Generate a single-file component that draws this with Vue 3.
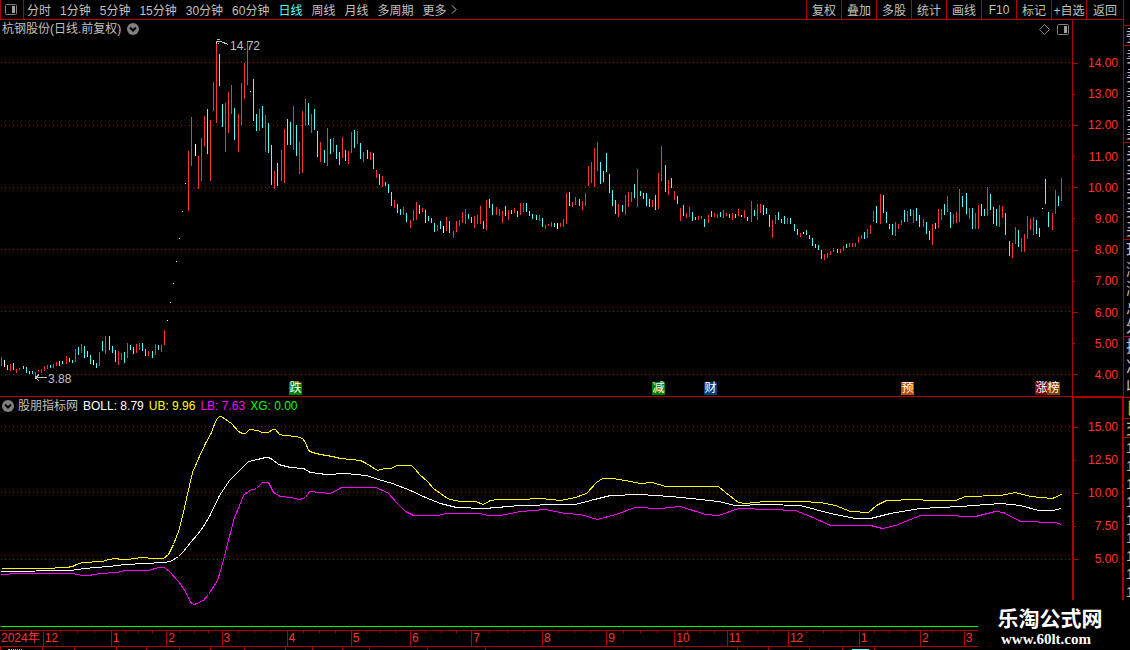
<template>
  <div class="screen">
    <main class="desk">
      <header class="toolbar">
        <button class="layout-btn" aria-label="布局">
          <svg class="pane-icon" viewBox="0 0 12 11">
            <rect x="0.5" y="0.5" width="11" height="10" rx="1" />
            <rect class="solid" x="7" y="2" width="3" height="7" />
          </svg>
        </button>
        <nav class="periods">
          <button v-for="p in periods" :key="p" :class="{ active: p === '日线' }">{{ p }}</button>
          <button class="more">
            更多
            <svg class="chevron" viewBox="0 0 6 9"><path d="M1 0.5L5 4.5L1 8.5" /></svg>
          </button>
        </nav>
        <nav class="tools">
          <button v-for="t in tools" :key="t">{{ t }}</button>
        </nav>
      </header>

      <section class="panel price">
        <div class="chart">
          <div class="chart-head">
            <span class="title">杭钢股份(日线.前复权)</span>
            <button class="round" aria-label="展开">
              <svg viewBox="0 0 12 12"><circle cx="6" cy="6" r="6" /><path d="M3 4.5L6 7.5L9 4.5" /></svg>
            </button>
            <div class="head-icons">
              <svg class="diamond" viewBox="0 0 11 11"><path d="M5.5 0.5L10.5 5.5L5.5 10.5L0.5 5.5Z" /></svg>
              <svg class="pane-icon" viewBox="0 0 12 11">
                <rect x="0.5" y="0.5" width="11" height="10" rx="1" />
                <rect class="solid" x="7" y="2" width="3" height="7" />
              </svg>
            </div>
          </div>
          <div class="plot">
            <svg viewBox="0 38 1072 358" preserveAspectRatio="none" shape-rendering="crispEdges">
              <path v-for="y in [62, 125, 187, 249, 311, 374]" :key="y" class="grid" :d="`M1 ${y}.5H1072`" />
              <path class="bar up" :d="bars('r')" />
              <path class="bar down" :d="bars('c')" />
              <path class="bar flat" :d="bars('w')" />
              <path class="arrow" d="M216.5 44V40.5M217 39.5H220M217 41.5H221L228 44.5M218 43.5H219" />
              <path class="arrow" d="M36 377.5H47M39 374.5L36 377.5L39 381M35.5 376V379" />
            </svg>
            <span v-for="m in marks" :key="m.text" class="mark" :style="{ left: pct(m.x, 1072), top: pct(m.y - 38, 358) }">{{ m.text }}</span>
            <span v-for="b in badges" :key="b.text" class="badge" :style="{ left: pct(b.x, 1072), background: b.color }">{{ b.text }}</span>
          </div>
        </div>
        <div class="axis">
          <span v-for="(v, i) in priceTicks" :key="v" :class="{ minor: i % 2 }">{{ v }}</span>
        </div>
      </section>

      <section class="panel indicator">
        <div class="chart">
          <div class="chart-head">
            <button class="round" aria-label="指标">
              <svg viewBox="0 0 12 12"><circle cx="6" cy="6" r="6" /><path d="M3 4.5L6 7.5L9 4.5" /></svg>
            </button>
            <span class="title">股朋指标网</span>
            <span class="boll">BOLL: 8.79</span>
            <span class="ub">UB: 9.96</span>
            <span class="lb">LB: 7.63</span>
            <span class="xg">XG: 0.00</span>
          </div>
          <div class="plot">
            <svg viewBox="0 414 1072 216" preserveAspectRatio="none" shape-rendering="crispEdges">
              <path v-for="y in [426, 492, 559]" :key="y" class="grid" :d="`M1 ${y}.5H1072`" />
              <g transform="translate(0.5 0.5)">
                <polyline class="line-ub" :points="ub" />
                <polyline class="line-boll" :points="boll" />
                <polyline class="line-lb" :points="lb" />
              </g>
              <path class="line-xg" d="M1 626.5H1072" />
            </svg>
          </div>
        </div>
        <div class="axis">
          <span v-for="(v, i) in bollTicks" :key="v" :class="{ minor: i % 2 }">{{ v }}</span>
        </div>
      </section>

      <div class="months">
        <div v-for="(m, i) in months" :key="i" class="month" :style="{ flexGrow: m.w }">
          {{ m.label }}
          <div v-if="i > 0" class="weeks"><i></i><i></i><i></i><i></i></div>
        </div>
      </div>
      <div class="strip">
        <div v-for="(w, i) in stripCells" :key="i" :style="{ flexGrow: w }"></div>
      </div>
    </main>

    <aside class="rail">
      <div v-for="(g, i) in quotes" :key="i" class="group" :class="g.kind">
        <span v-for="(r, j) in g.rows" :key="j">{{ r }}</span>
      </div>
    </aside>

    <div class="brand">
      <strong>乐淘公式网</strong>
      <a href="#">www.60lt.com</a>
    </div>
  </div>
</template>

<script setup>
const periods = ['分时', '1分钟', '5分钟', '15分钟', '30分钟', '60分钟', '日线', '周线', '月线', '多周期']
const tools = ['复权', '叠加', '多股', '统计', '画线', 'F10', '标记', '+自选', '返回']
const priceTicks = ['14.00', '13.00', '12.00', '11.00', '10.00', '9.00', '8.00', '7.00', '6.00', '5.00', '4.00']
const bollTicks = ['15.00', '12.50', '10.00', '7.50', '5.00']

const marks = [
  { text: '14.72', x: 230, y: 46 },
  { text: '3.88', x: 48, y: 379 },
]
const badges = [
  { text: '跌', x: 289, color: '#008000' },
  { text: '减', x: 652, color: '#008000' },
  { text: '财', x: 704, color: '#004080' },
  { text: '预', x: 901, color: '#c04c10' },
  { text: '涨', x: 1035, color: '#800000' },
  { text: '榜', x: 1047, color: '#804000' },
]

const months = [
  { label: '2024年', w: 43 },
  { label: '12', w: 68 },
  { label: '1', w: 55 },
  { label: '2', w: 55 },
  { label: '3', w: 65 },
  { label: '4', w: 64 },
  { label: '5', w: 59 },
  { label: '6', w: 61 },
  { label: '7', w: 71 },
  { label: '8', w: 64 },
  { label: '9', w: 68 },
  { label: '10', w: 52 },
  { label: '11', w: 61 },
  { label: '12', w: 71 },
  { label: '1', w: 61 },
  { label: '2', w: 43 },
  { label: '3', w: 162 },
]
const stripCells = [42, 31, 42, 29, 33, 30, 34, 41, 26, 30, 26, 58, 58, 255, 31, 41, 32, 32, 252]

const quotes = [
  { kind: 'top', rows: [] },
  { kind: 'ratio', rows: ['委'] },
  { kind: '', rows: ['卖', '卖', '卖', '卖', '卖'] },
  { kind: '', rows: ['买', '买', '买', '买', '买'] },
  { kind: '', rows: ['现', '涨', '涨', '总', '外'] },
  { kind: 'basics', rows: ['换', '净', '收'] },
  { kind: 'tab', rows: ['日'] },
  { kind: 'deal', rows: ['交'] },
  { kind: 'ticks', rows: Array(9).fill('1') },
]

// x, high, low, colour (r up, c down, w flat)
const candles = `
1 357 366 r|4 360 367 w|7 365 370 c|10 364 371 r|13 363 370 c|16 369 373 r|19 368 370 r|23 366 369 c|26 367 373 c|29 371 374 c
32 371 374 c|35 372 378 r|38 370 372 r|41 369 373 r|44 366 371 r|47 365 369 r|50 365 368 c|53 364 368 r|56 362 366 r|59 361 366 c
62 361 364 c|66 356 364 r|69 358 362 c|72 360 363 c|75 349 362 r|78 347 355 c|81 344 353 r|84 346 358 c|87 351 357 c|90 355 364 c
93 360 365 w|96 363 368 c|99 352 366 r|102 341 351 c|105 336 354 r|109 336 350 c|112 346 353 c|115 350 362 c|118 351 365 r|121 353 360 r
124 352 363 c|127 343 358 r|130 345 350 c|133 347 354 c|136 344 353 r|139 343 350 r|142 343 351 c|145 349 356 c|148 351 356 r|152 351 358 c
155 344 355 r|158 345 350 c|161 345 352 r|164 330 345 r|167 320 321 w|170 302 303 w|173 283 284 w|176 261 262 w|179 238 239 w|182 211 212 w
185 183 184 w|188 151 211 r|191 117 166 r|195 144 156 w|198 156 189 r|201 138 181 r|204 116 146 r|207 109 154 c|210 120 181 r|213 82 111 r
216 43 123 r|219 54 86 c|222 104 127 c|225 103 152 r|228 92 133 r|231 85 114 r|234 108 140 c|238 114 152 r|241 83 125 r|244 63 99 r
247 41 85 r|250 91 92 w|253 79 121 c|256 114 131 c|259 109 131 r|262 106 128 c|265 115 152 r|268 123 153 c|271 145 185 c|274 171 189 r
277 163 186 c|281 150 181 r|284 129 183 r|287 119 145 c|290 122 145 c|293 106 150 r|296 125 156 c|299 142 174 r|302 111 173 r|305 99 125 r
308 103 125 c|311 114 133 r|314 109 130 c|317 131 157 c|320 142 162 r|324 150 163 c|327 128 166 r|330 139 154 c|333 138 152 r|336 145 159 c
339 152 165 c|342 137 158 r|345 150 161 c|348 151 164 r|351 132 153 r|354 130 148 c|357 131 144 r|360 143 159 c|363 152 162 r|367 150 159 c
370 152 160 r|373 153 169 c|376 170 178 r|379 174 185 c|382 176 187 r|385 182 186 c|388 184 193 c|391 192 206 c|394 200 208 r|397 204 213 c
400 209 215 c|403 207 215 r|406 213 222 c|410 220 228 r|413 210 221 r|416 202 220 r|419 205 214 c|422 208 212 r|425 210 223 c|428 216 221 c
431 218 223 c|434 223 232 c|437 225 231 r|440 221 229 c|443 226 233 w|446 217 231 r|449 221 233 c|453 231 238 r|456 221 232 r|459 220 226 r
462 212 223 r|465 209 224 r|468 214 219 c|471 217 223 c|474 216 228 r|477 215 224 r|480 206 224 r|483 221 229 c|486 200 230 r|489 199 208 c
492 204 215 c|496 207 215 r|499 209 216 r|502 211 223 r|505 206 216 c|508 210 220 r|511 210 214 c|514 208 213 r|517 211 217 c|520 203 215 r
523 203 212 r|526 203 212 c|529 211 216 c|532 214 219 c|536 215 220 c|539 215 221 r|542 218 227 c|545 225 229 r|548 224 226 r|551 222 227 r
554 223 227 c|557 223 229 w|560 223 227 r|563 219 227 r|566 193 224 r|569 192 206 c|572 202 207 r|575 197 205 r|579 199 206 c|582 201 210 r
585 193 206 r|588 166 186 r|591 162 183 r|594 148 187 r|597 142 171 r|600 162 184 c|603 171 182 c|606 153 172 c|609 174 193 c|612 190 206 c
615 200 214 c|618 204 217 r|622 205 212 c|625 195 215 r|628 192 207 r|631 192 202 r|634 184 198 c|637 169 207 r|640 191 196 c|643 193 199 c
646 193 206 c|649 199 207 c|652 200 207 r|655 195 210 c|658 173 209 r|661 146 181 r|665 165 192 c|668 180 195 r|671 178 188 c|674 191 200 r
677 196 204 c|680 208 221 r|683 205 216 c|686 213 218 r|689 207 217 r|692 212 221 c|695 217 220 c|698 216 220 r|701 216 219 r|704 219 227 c
708 215 223 r|711 211 217 c|714 213 217 r|717 214 218 r|720 212 217 c|723 210 218 r|726 213 216 r|729 214 218 c|732 213 220 r|735 214 218 c
738 209 216 r|741 215 217 w|744 210 218 r|747 217 221 c|751 201 222 r|754 210 216 c|757 204 220 r|760 204 213 r|763 205 215 c|766 208 214 c
769 215 227 c|772 220 238 r|775 215 224 r|778 212 220 c|781 219 223 c|784 216 224 c|787 218 224 r|790 218 224 c|794 224 231 c|797 229 235 c
800 233 237 r|803 232 234 w|806 230 235 c|809 235 239 c|812 238 246 c|815 244 248 c|818 245 250 c|821 250 259 c|824 254 260 r|827 253 258 r
830 251 255 r|833 248 252 r|837 249 253 c|840 249 253 r|843 246 251 r|846 244 248 c|849 243 247 r|852 243 247 r|855 243 247 r|858 237 243 r
861 235 239 r|864 232 239 c|867 229 238 r|870 225 234 r|873 211 222 r|876 206 223 c|880 194 224 r|883 195 213 c|886 212 223 c|889 224 229 c
892 224 235 c|895 222 236 r|898 224 229 r|901 220 225 r|904 210 222 c|907 211 222 r|910 209 216 c|913 210 223 r|916 208 221 c|919 215 227 c
923 219 227 r|926 222 234 c|929 231 240 c|932 224 245 r|935 223 229 c|938 209 228 r|941 209 220 r|944 204 215 c|947 196 212 r|950 212 228 c
953 214 224 r|956 212 223 r|959 189 222 r|962 196 207 c|966 193 214 c|969 208 219 r|972 208 229 c|975 213 229 r|978 205 229 r|981 204 216 c
984 209 216 c|987 187 216 r|990 194 210 c|993 207 224 c|996 209 226 c|999 205 227 r|1002 206 218 r|1005 213 235 c|1009 241 256 c|1012 243 258 r
1015 227 244 r|1018 230 247 c|1021 238 252 r|1024 234 252 r|1027 216 239 r|1030 219 230 r|1033 217 235 r|1036 220 234 c|1039 228 237 c
1042 208 209 w|1045 179 204 c|1048 212 227 c|1052 213 230 r|1055 190 214 r|1058 196 206 c|1061 178 201 r
`
  .trim()
  .split(/[|\n]/)
  .map((s) => s.split(' '))

const bars = (kind) =>
  candles
    .filter((c) => c[3] === kind)
    .map(([x, hi, lo]) => `M${x}.5 ${hi}V${lo}`)
    .join('')

const pct = (v, total) => `${(v / total) * 100}%`

const ub =
  '1,568 53,568 56,567 66,567 72,566 76,564 82,562 102,561 108,559 116,558 120,559 128,559 133,558 142,557 152,558 163,558 168,554 173,544 178,531 182,516 186,498 189,485 192,472 199,456 205,443 211,432 215,421 217,418 219,416 221,416 231,423 238,431 242,433 245,433 249,429 257,430 262,432 268,432 272,429 275,429 279,434 284,435 296,436 302,438 305,442 308,450 312,452 320,454 332,456 340,458 360,460 366,463 377,470 384,468 390,468 397,465 411,465 415,469 419,474 427,481 433,488 440,493 447,498 454,500 461,501 475,501 483,504 490,500 497,499 520,499 540,498 560,500 575,497 586,493 596,482 602,478 612,478 625,480 640,483 652,482 665,486 718,486 725,492 738,502 745,503 765,501 800,501 820,502 835,505 850,511 868,512 876,505 886,500 915,499 930,500 955,500 965,496 1000,495 1015,492 1030,496 1052,498 1061,494'
const boll =
  '1,571 70,570 84,568 108,566 125,564 145,563 163,562 170,561 178,556 183,551 190,542 197,534 203,526 209,516 219,495 229,480 238,471 248,461 257,459 265,457 268,457 272,459 278,464 290,467 303,468 310,472 326,474 345,473 366,475 378,479 392,483 410,490 425,497 440,503 456,507 484,508 520,505 560,504 575,504 590,500 610,495 640,494 670,496 700,499 718,501 735,505 765,504 800,505 815,509 830,513 855,518 870,518 890,513 920,508 960,506 1000,503 1020,505 1038,510 1052,510 1061,508'
const lb =
  '1,574 16,573 72,573 82,575 88,575 100,573 116,572 125,570 148,570 158,567 164,567 170,572 178,581 183,588 191,603 194,604 203,600 208,594 217,580 220,570 224,556 229,536 234,517 239,505 243,495 249,490 256,488 262,482 268,482 273,492 280,496 290,497 299,499 305,497 309,491 330,493 341,487 375,487 387,492 397,503 405,511 413,515 438,515 445,513 480,513 487,515 500,515 520,511 545,509 565,513 580,514 597,519 615,514 635,507 660,508 680,506 705,514 718,515 738,508 770,509 795,510 810,516 830,525 870,525 882,528 895,525 920,515 940,515 975,516 995,511 1003,512 1020,521 1055,522 1061,524'
</script>

<style>
body {
  background: #000;
}
</style>

<style scoped>
.screen {
  position: relative;
  display: flex;
  height: 100vh;
  overflow: hidden;
  background: #000;
  color: #c0c0c0;
  font-family: 'Liberation Sans', 'Noto Sans CJK SC', sans-serif;
  font-size: 12px;
}
.desk {
  flex: 1;
  min-width: 0;
  display: flex;
  flex-direction: column;
}
button {
  padding: 0;
  border: 0;
  background: none;
  color: inherit;
  font: inherit;
  white-space: nowrap;
}
svg {
  display: block;
  fill: none;
}
.toolbar {
  display: flex;
  flex: 0 0 19px;
  border-bottom: 1px solid #b00000;
}
.layout-btn {
  width: 24px;
  padding-left: 4px;
  border: solid #b00000;
  border-width: 0 1px;
}
.pane-icon {
  width: 12px;
  height: 11px;
  stroke: #808080;
}
.pane-icon .solid {
  fill: #a0a0a0;
  stroke: none;
}
.periods {
  display: flex;
  gap: 9px;
  padding-left: 3px;
}
.active {
  color: #54ffff;
}
.more {
  display: flex;
  align-items: center;
  gap: 4px;
}
.chevron {
  width: 6px;
  height: 9px;
  stroke: #c0c0c0;
}
.tools {
  display: flex;
  margin-left: auto;
}
.tools button {
  width: 35px;
  border-left: 1px solid #b00000;
}
.tools button:last-child {
  width: 37px;
}
.panel {
  display: flex;
  min-height: 0;
}
.price {
  flex: 377 1 0;
}
.indicator {
  flex: 233 1 0;
}
.chart {
  flex: 1;
  min-width: 0;
  display: flex;
  flex-direction: column;
}
.price .chart,
.price .axis {
  border-bottom: 1px solid #b00000;
}
.chart-head {
  display: flex;
  align-items: center;
  flex: 0 0 18px;
  padding: 0 3px 0 2px;
  line-height: 16px;
  white-space: nowrap;
}
.indicator .chart-head {
  flex-basis: 17px;
}
.price .title {
  margin-right: 6px;
}
.indicator .title {
  margin: 0 5px 0 4px;
}
.round svg {
  width: 12px;
  height: 12px;
}
.round circle {
  fill: #808080;
}
.round path {
  stroke: #000;
  stroke-width: 2;
}
.head-icons {
  display: flex;
  gap: 7px;
  margin-left: auto;
}
.diamond {
  width: 11px;
  height: 11px;
  stroke: #808080;
}
.boll {
  color: #fff;
  margin-right: 5px;
}
.ub {
  color: #ff0;
  margin-right: 5px;
}
.lb {
  color: #f0f;
  margin-right: 5px;
}
.xg {
  color: #0f0;
}
.plot {
  position: relative;
  flex: 1;
  min-height: 0;
}
.plot svg {
  width: 100%;
  height: 100%;
}
.grid {
  stroke: #b00000;
  stroke-dasharray: 1 3;
}
.up {
  stroke: #ff3232;
}
.down {
  stroke: #54ffff;
}
.flat {
  stroke: #fff;
}
.arrow {
  stroke: #c0c0c0;
}
.line-ub {
  stroke: #ff0;
}
.line-boll {
  stroke: #fff;
}
.line-lb {
  stroke: #f0f;
}
.line-xg {
  stroke: #0f0;
}
.mark {
  position: absolute;
  line-height: 14px;
  margin-top: -7px;
}
.badge {
  position: absolute;
  bottom: 1px;
  width: 13px;
  height: 13px;
  line-height: 13px;
  text-align: center;
  color: #fff;
}
.axis {
  display: flex;
  flex-direction: column;
  justify-content: space-between;
  box-sizing: border-box;
  width: 51px;
  padding: 37px 5px 15px 0;
  border-left: 1px solid #b00000;
  color: #ff3232;
  line-height: 12px;
  text-align: right;
}
.axis span {
  display: flex;
  align-items: center;
  justify-content: space-between;
}
.axis span::before {
  content: '';
  width: 5px;
  height: 1px;
  background: #b00000;
}
.axis .minor::before {
  width: 2px;
}
.indicator .axis {
  padding: 23px 4px 65px 0;
  border-top: 1px solid #b00000;
  border-left-width: 2px;
  border-right: 1px solid #b00000;
}
.months {
  display: flex;
  flex: 0 0 15px;
  border: solid #b00000;
  border-width: 1px 0;
  color: #ff3232;
  line-height: 15px;
}
.month {
  position: relative;
  flex: 1 1 0;
  min-width: 0;
  height: 15px;
  box-sizing: border-box;
  padding-left: 1px;
  white-space: nowrap;
}
.month + .month {
  border-left: 1px solid #b00000;
}
.weeks {
  position: absolute;
  inset: 0 0 auto 0;
  display: flex;
}
.weeks i {
  flex: 1;
  height: 2px;
}
.weeks i + i {
  border-left: 1px solid #b00000;
}
.strip {
  display: flex;
  flex: 0 0 3px;
}
.strip div {
  flex: 1 1 0;
  box-sizing: border-box;
  border-left: 1px solid #b00000;
}
.strip div:first-child::after,
.strip div:nth-child(18)::after {
  content: '';
  display: block;
  width: 14px;
  margin: 2px 0 0 7px;
  border-top: 1px dotted #c0c0c0;
}
.strip div:nth-child(18)::after {
  width: 17px;
  margin-left: 9px;
  border-top: 1px solid #54ffff;
}
.rail {
  flex: 0 0 6px;
  border-left: 1px solid #b00000;
  overflow: hidden;
}
.group {
  padding: 1px 0 0 2px;
  border-top: 1px solid #b00000;
  font-size: 16px;
  line-height: 19px;
}
.group span {
  display: block;
  height: 19px;
}
.group.top {
  height: 25px;
  padding: 0;
  border: 0;
}
.group.ratio,
.group.deal {
  padding-top: 0;
}
.group.deal span {
  height: 18px;
}
.group.basics {
  padding-top: 0;
}
.group.basics span {
  height: 20px;
}
.group.tab {
  color: #c0c000;
}
.group.ticks {
  font-size: 14px;
}
.group.ticks span {
  height: 18px;
  line-height: 18px;
}
.brand {
  position: absolute;
  right: 0;
  bottom: 0;
  display: flex;
  flex-direction: column;
  align-items: center;
  box-sizing: border-box;
  width: 152px;
  height: 50px;
  padding: 6px 8px 0 0;
  background: #000;
  color: #fff;
}
.brand strong {
  font-size: 21px;
  line-height: 25px;
}
.brand a {
  padding-right: 8px;
  color: inherit;
  font: bold 15px/16px 'Liberation Serif', serif;
  text-decoration: none;
}
</style>
